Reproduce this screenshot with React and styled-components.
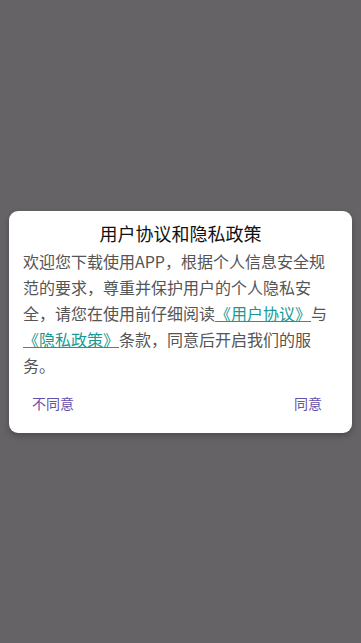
import styled, { createGlobalStyle } from "styled-components";

const GlobalStyle = createGlobalStyle`
  html, body {
    margin: 0;
    padding: 0;
    height: 100%;
  }
  body {
    font-family: "Noto Sans CJK SC", "Noto Sans", sans-serif;
  }
`;

const App = () => {
  return (
    <Mask>
      <GlobalStyle />
      <Dialog>
        <Title>用户协议和隐私政策</Title>
        <Content>
          欢迎您下载使用APP，根据个人信息安全规范的要求，尊重并保护用户的个人隐私安全，请您在使用前仔细阅读
          <Link>《用户协议》</Link>与<Link>《隐私政策》</Link>
          条款，同意后开启我们的服务。
        </Content>
        <Actions>
          <ActionButton>不同意</ActionButton>
          <ActionButton>同意</ActionButton>
        </Actions>
      </Dialog>
    </Mask>
  );
};

export default App;

const Mask = styled.div`
  width: 100%;
  height: 100vh;
  background-color: #656366;
  display: flex;
  align-items: center;
  justify-content: center;
  padding: 0 9px;
  box-sizing: border-box;
`;

const Dialog = styled.div`
  width: 100%;
  background-color: #ffffff;
  border-radius: 9px;
  padding: 9px 14px 17px;
  box-sizing: border-box;
  box-shadow: 0 3px 6px rgba(0, 0, 0, 0.25);
`;

const Title = styled.div`
  font-size: 18px;
  line-height: 26px;
  color: #111111;
  text-align: center;
`;

const Content = styled.div`
  margin-top: 2px;
  font-size: 16px;
  line-height: 26px;
  color: #555555;
  text-align: left;
`;

const Link = styled.span`
  color: #179a94;
  text-decoration: underline;
`;

const Actions = styled.div`
  display: flex;
  justify-content: space-between;
  margin-top: 12px;
  padding: 0 7px 0 0;
`;

const ActionButton = styled.div`
  font-size: 14px;
  line-height: 20px;
  padding: 3px 9px;
  color: #6550ad;
  cursor: pointer;
`;
